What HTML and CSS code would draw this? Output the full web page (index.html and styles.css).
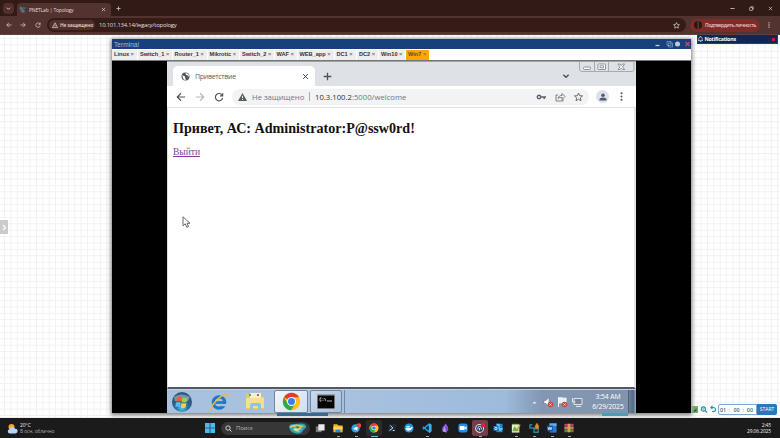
FILE: index.html
```html
<!DOCTYPE html>
<html lang="ru">
<head>
<meta charset="utf-8">
<title>PNETLab | Topology</title>
<link rel="stylesheet" href="styles.css">
</head>
<body>
<svg class="defs" aria-hidden="true">
  <symbol id="chrome" viewBox="0 0 24 24"><circle cx="12" cy="12" r="11" fill="#fbc116"/><path d="M12 12 2.5 6.5A11 11 0 0 1 21.5 6.5H12Z" fill="#e33b2e"/><path d="M2.5 6.5A11 11 0 0 0 11.5 23L16.7 14.7 12 12 7.2 14.7Z" fill="#2da94f"/><circle cx="12" cy="12" r="5.6" fill="#fff"/><circle cx="12" cy="12" r="4.4" fill="#3c7de8"/></symbol>
  <symbol id="reload" viewBox="0 0 12 12"><path d="M10 4.2A4.4 4.4 0 1 0 10.4 7M10.4 1.5v3.2H7.2" fill="none" stroke="currentColor" stroke-width="1.4"/></symbol>
  <symbol id="arrow" viewBox="0 0 12 12"><path d="M11 6H1.6M6 1.5 1.5 6 6 10.5" fill="none" stroke="currentColor" stroke-width="1.4"/></symbol>
  <symbol id="star" viewBox="0 0 12 12"><path d="m6 1 1.5 3.3 3.5.4-2.6 2.4.7 3.5L6 8.8l-3.1 1.8.7-3.5L1 4.7l3.5-.4Z" fill="none" stroke="currentColor" stroke-width="1.2"/></symbol>
  <symbol id="down" viewBox="0 0 12 12"><path d="m2 4 4 4 4-4" fill="none" stroke="currentColor" stroke-width="2"/></symbol>
  <symbol id="close" viewBox="0 0 12 12"><path d="m2 2 8 8M10 2l-8 8" stroke="currentColor" stroke-width="1.6"/></symbol>
  <symbol id="plus" viewBox="0 0 12 12"><path d="M6 1v10M1 6h10" stroke="currentColor" stroke-width="1.7"/></symbol>
  <symbol id="dots" viewBox="0 0 12 12"><g fill="currentColor"><circle cx="6" cy="1.7" r="1.3"/><circle cx="6" cy="6" r="1.3"/><circle cx="6" cy="10.3" r="1.3"/></g></symbol>
</svg>

<header class="tabstrip">
  <span class="tabsearch"><svg width="5" height="5"><use href="#down"/></svg></span>
  <div class="tab">
    <svg class="fav" viewBox="0 0 12 12"><path d="M1 2h10v3H1zM3 7h7v4H3z" fill="#237490"/><path d="M3 1v6l4-1v5" stroke="#db5d4d" fill="none" stroke-width="1.4"/></svg>
    <span class="tab-title">PNETLab | Topology</span>
    <svg class="tab-x" width="5" height="5"><use href="#close"/></svg>
  </div>
  <svg class="newtab" width="5" height="5"><use href="#plus"/></svg>
  <div class="winbtns">
    <svg viewBox="0 0 12 12"><path d="M1 6h10" stroke="#ddd" stroke-width="1.8"/></svg>
    <svg viewBox="0 0 12 12"><rect x="1.5" y="3.5" width="7" height="7" rx="1" fill="none" stroke="#ddd" stroke-width="1.6"/><path d="M4 1.5h5q1.7 0 1.7 2V8" fill="none" stroke="#ddd" stroke-width="1.5"/></svg>
    <svg viewBox="0 0 12 12" color="#ddd"><use href="#close"/></svg>
  </div>
</header>
<nav class="toolbar">
  <svg class="nav-i" width="6" height="6"><use href="#arrow"/></svg>
  <svg class="nav-i flip" width="6" height="6"><use href="#arrow"/></svg>
  <svg class="nav-i" width="6" height="6"><use href="#reload"/></svg>
  <div class="omni">
    <span class="insecure"><svg width="6" height="6" viewBox="0 0 12 12"><path d="M6 1.5 11.2 11H.8ZM6 5v3M6 8.6v1.2" fill="none" stroke="#eee" stroke-width="1.2"/></svg><b>Не защищено</b></span>
    <span class="url">10.101.134.14/legacy/topology</span>
    <svg class="omni-star" width="7" height="7"><use href="#star"/></svg>
  </div>
  <span class="verify"><i></i><b>Подтвердить личность</b></span>
  <svg class="menu" width="6" height="6"><use href="#dots"/></svg>
</nav>

<main class="canvas">
  <div class="side-handle"><svg width="5" height="7" viewBox="0 0 5 7"><path d="m1 1 2.5 2.5L1 6" fill="none" stroke="#fff" stroke-width="1.2"/></svg></div>

  <div class="notif">
    <svg width="5" height="6" viewBox="0 0 12 14"><path d="M2 10V6a4 4 0 0 1 8 0v4l1.5 1H.5ZM4.5 13h3M6 0v2" fill="none" stroke="#fff" stroke-width="1.5"/></svg>
    <b>Notifications</b><i></i>
  </div>

  <div class="peek peek-blue"></div>
  <div class="peek peek-teal"></div>

  <section class="terminal">
    <div class="term-title"><span>Terminal</span>
      <svg width="36" height="10" viewBox="0 0 36 10"><path d="M.5 6.500h4" stroke="#c6d2e4" stroke-width="1.200"/><path d="M12 2.500h4v4h-4zM13.500 4h4v4h-4z" fill="#17407c" stroke="#7d9ac2" stroke-width=".8"/><circle cx="22.500" cy="5" r="2.500" fill="#c2cbd4"/><path d="m30.500 3 4 4m0-4-4 4" stroke="#cf4761" stroke-width="1.300"/></svg>
    </div>
    <div class="term-tabs">
      <span class="w1">Linux <i>×</i></span><span class="w2">Switch_1 <i>×</i></span><span class="w3">Router_1 <i>×</i></span><span class="w4">Mikrotic <i>×</i></span><span class="w5">Switch_2 <i>×</i></span><span class="w6">WAF <i>×</i></span><span class="w7">WEB_app <i>×</i></span><span class="w8">DC1 <i>×</i></span><span class="w9">DC2 <i>×</i></span><span class="w10">Win10 <i>×</i></span><span class="w11 on">Win7 <i>×</i></span>
    </div>
    <div class="screen">
      <div class="guest">
        <div class="g-strip">
          <div class="g-tab">
            <svg width="9" height="9" viewBox="0 0 18 18"><circle cx="9" cy="9" r="8" fill="#53585e"/><path d="M3 6c2 3 5 1 5 4s2 3 1 6c-4 0-6-4-6-10ZM10 2c-2 2 0 4 2 4s1 3 4 3c0-4-2-6-6-7Z" fill="#fff"/></svg>
            <span>Приветствие</span>
            <svg class="g-tab-x" width="7" height="7"><use href="#close"/></svg>
          </div>
          <svg class="g-plus" width="9" height="9"><use href="#plus"/></svg>
          <svg class="g-down" width="8" height="8"><use href="#down"/></svg>
          <svg class="g-win" width="56" height="10" viewBox="0 0 56 10"><path d="M.5 0v7q0 2.500 2.500 2.500h50q2 0 2-2.500V0M15.500 0v9.500M29.500 0v9.500" fill="none" stroke="#a6abb2" stroke-width="1"/><g fill="#fff" stroke="#777d86" stroke-width=".8"><rect x="4.500" y="5" width="7" height="2.500" rx="1"/><rect x="19" y="2" width="7.500" height="5.500" rx=".5"/><path d="M21 3.800h3.500v2H21zM39 2h2l1.300 1.500L43.600 2h2l-2 2.800 2 2.700h-2l-1.300-1.500L41 7.500h-2l2-2.700Z"/></g></svg>
        </div>
        <div class="g-bar">
          <svg class="g-back" width="10" height="10"><use href="#arrow"/></svg>
          <svg class="g-fwd flip" width="10" height="10"><use href="#arrow"/></svg>
          <svg class="g-rel" width="10" height="10"><use href="#reload"/></svg>
          <div class="g-omni">
            <svg width="9" height="8" viewBox="0 0 18 16"><path d="M9 0 18 16H0Z" fill="#555a60"/><path d="M9 5.500v5M9 12v2" stroke="#fff" stroke-width="1.800"/></svg>
            <span class="g-insec">Не защищено</span><span class="g-sep"></span><span class="g-url"><em>10.3.100.2</em>:5000/welcome</span>
            <svg class="g-tools" width="50" height="10" viewBox="0 0 50 10"><g fill="none" stroke="#5f6368"><circle cx="3" cy="5" r="1.700" stroke-width="1.500"/><path d="M4.500 5H10M8.200 5v2" stroke-width="1.500"/><path d="M22 3h-2v6h7V7M22 6.500c.5-2.500 2-3 4-3V1.500l3 3-3 3V5.500c-2 0-3 0-4 1Z" stroke-width=".8"/><path d="m42.500 1 1.100 2.700 3 .2-2.300 2 .7 2.900-2.500-1.600L40 8.800l.7-2.900-2.300-2 3-.2Z" stroke-width=".9"/></g></svg>
          </div>
          <span class="avatar"><svg width="8" height="8" viewBox="0 0 8 8"><circle cx="4" cy="2.200" r="1.800" fill="#525b73"/><path d="M.5 7.500V6Q1 4.500 4 4.500T7.500 6v1.500Z" fill="#525b73"/></svg></span>
          <svg class="g-menu" width="9" height="9"><use href="#dots"/></svg>
        </div>
        <article class="page">
          <h2>Привет, АС: Administrator:P@ssw0rd!</h2>
          <a>Выйти</a>
          <svg class="cursor" width="9" height="12" viewBox="0 0 9 12"><path d="M1 .8v9l2.200-2 1.600 3.500 1.700-.8L5 7.300h3Z" fill="#fff" stroke="#555863" stroke-width=".9"/></svg>
        </article>
        <footer class="g-task">
          <svg class="orb" width="22" height="22" viewBox="0 0 22 22"><defs><radialGradient id="o" cy=".8"><stop stop-color="#55c7ed"/><stop offset=".6" stop-color="#276f9f"/><stop offset="1" stop-color="#32587d"/></radialGradient></defs><circle cx="11" cy="11" r="10" fill="url(#o)"/><path d="M3 6q7-5 16 0l-2 4H4Z" fill="#a4bfd1" opacity=".6"/><path d="M6 6q2-1.200 4.600 0l-.7 4.500q-2.300-1-4.500 0Z" fill="#f15c2b"/><path d="M11.500 6.500q2.300 1 5 0l-.9 4.500q-2.300 1-4.800 0Z" fill="#9bcf47"/><path d="M5 11.500q2.300-1 4.600 0l-.7 4.500q-2.300-1.200-4.600 0Z" fill="#5bbbed"/><path d="M10.500 12q2.300 1 4.900 0l-.9 4.500q-2.300.8-4.700 0Z" fill="#fdd043"/></svg>
          <svg class="ie" width="20" height="20" viewBox="0 0 20 20"><circle cx="10" cy="10.500" r="5.700" fill="none" stroke="#1e78c5" stroke-width="3.200"/><path d="M6 10.500h10" stroke="#1e78c5" stroke-width="2.600"/><path d="M12.500 12h5v2.200h-5z" fill="#a9c1df"/><path d="M3 18C-1 18 7 7 14 3.200c5-3 4.500 0 3.500 2.300" fill="none" stroke="#edba39" stroke-width="1.500"/></svg>
          <svg class="exp" width="21" height="20" viewBox="0 0 21 20"><path d="M1 3q0-1 1-1h5l2 2h9q1 0 1 1v12H1Z" fill="#e9ca6a"/><path d="M5 1h11v6H5z" fill="#f8f2ce"/><path d="M1 6h18v10H1z" fill="#f5df91"/><path d="M5 18v-5q0-2 2-2h7q2 0 2 2v5h-3v-4H8v4Z" fill="#83c9ec"/><path d="M4 2h2v2H4z" fill="#5ca968"/><path d="M12 2h2v2h-2z" fill="#d75b3c"/></svg>
          <div class="g-btn b1"><svg width="19" height="19"><use href="#chrome"/></svg></div>
          <div class="g-btn b2"><svg width="18" height="15" viewBox="0 0 18 15"><path d="M0 0h18v15H0z" fill="#9ba0a8"/><path d="M.7 1.500h16.600v12.800H.7z" fill="#050505"/><path d="M4.500 4H3v3h1.500M6 4.500v.8M6 6v.8M7.500 4l1.500 3M10 7h5" fill="none" stroke="#ddd" stroke-width=".8"/></svg></div>
          <span class="g-edge"></span>
          <svg class="tray" width="54" height="12" viewBox="0 0 54 12"><path d="m2.500 7.500 2-2 2 2Z" fill="#edf3fa"/><path d="M14 4.500h2l3-3v9l-3-3h-2Z" fill="#fff" stroke="#667"  stroke-width=".5"/><circle cx="20.500" cy="8.500" r="2.800" fill="#d94136"/><path d="m19.500 7.500 2 2m0-2-2 2" stroke="#fff" stroke-width=".8"/><path d="M28.500 1v10M29 2c3-1 4 1 7 0v5c-3 1-4-1-7 0" fill="#e8edf2" stroke="#fff" stroke-width=".9"/><circle cx="34.500" cy="8.500" r="2.800" fill="#d94136"/><path d="m33.500 7.500 2 2m0-2-2 2" stroke="#fff" stroke-width=".8"/><path d="M44 2.500h8v6h-8zM46 10.500h5M42.500 2v4h3" fill="#7a8796" stroke="#e8edf3" stroke-width=".9"/></svg>
          <div class="g-clock">3:54 AM<br>6/29/2025</div>
          <span class="g-peek"></span>
        </footer>
      </div>
    </div>
  </section>

  <div class="timer">
    <svg width="24" height="9" viewBox="0 0 24 9"><path d="M0 1h6v7H0z" fill="#78a97a"/><path d="M4.500 3v3.500H1Z" fill="#315e36"/><g fill="none" stroke="#2097a0" stroke-width="1.100"><circle cx="11.500" cy="4" r="2.100"/><path d="m13 5.500 2 2M10.500 4h2M19 2.500h2.500q2 0 2 2t-2 2H20M20.500 .8 18.800 2.500l1.700 1.700"/></g></svg>
    <div class="timebox"><b>01</b><i>:</i><b>00</b><i>:</i><b>00</b></div><span class="start">START</span>
  </div>
</main>

<footer class="taskbar">
  <div class="weather">
    <svg width="11" height="11" viewBox="0 0 11 11"><circle cx="4.500" cy="4" r="3" fill="#f6a82d"/><path d="M2.500 10.500a2.200 2.200 0 0 1 0-4.300A3 3 0 0 1 8 5.700a2.400 2.400 0 0 1 .5 4.800Z" fill="#bad4fb"/></svg>
    <div>20°C<br><span>В осн. облачно</span></div>
  </div>
  <svg class="win" width="10" height="10" viewBox="0 0 10 10"><path d="M0 0h4.700v4.700H0zM5.300 0H10v4.700H5.300zM0 5.300h4.700V10H0zM5.300 5.300H10V10H5.300z" fill="#44bdf2"/></svg>
  <div class="search"><svg width="7" height="7" viewBox="0 0 7 7"><circle cx="3" cy="3" r="2.200" fill="none" stroke="#ddd" stroke-width=".9"/><path d="m4.700 4.700 1.800 1.800" stroke="#ddd"/></svg><span>Поиск</span>
    <svg class="art" width="19" height="11" viewBox="0 0 19 11"><path d="M1 4q0-3 5-3l8-.500q5 1 4 4l-3 3q-2 4-7 3-6-1-7-6.500Z" fill="#31a4b4"/><path d="M2 3q6-3 14 0l-3 2Q7 3 2 5Z" fill="#e3bd65"/><path d="M5 6q5-3 9 0l-4 1 2 2-5-1Z" fill="#d8e19c"/><path d="m8 3 4 1-3 2Z" fill="#427a46"/></svg></div>
  <div class="apps">
    <span><svg viewBox="0 0 12 12"><path d="M1 4h7v7H1z" fill="#777"/><path d="M4 1.500h7.500V9H4z" fill="#e9e9e9"/></svg></span>
    <span class="run"><svg viewBox="0 0 12 12"><path d="M.5 1.500H5L6.500 3h5v8H.5z" fill="#f5b51e"/><path d="M.5 4.500h11V8H.5z" fill="#ffd663"/><path d="M3 8h6v3H3z" fill="#2489d8"/></svg></span>
    <span class="run"><svg viewBox="0 0 12 12"><circle cx="5.500" cy="6.500" r="5" fill="#27a5e5"/><path d="m2 6.500 6.500-2.700-1.200 5.500-2-1.500-1 1-.3-2Z" fill="#fff"/><circle cx="9.500" cy="3" r="2.800" fill="#ed434e"/></svg></span>
    <span class="run active"><svg viewBox="0 0 12 12"><use href="#chrome"/></svg></span>
    <span><svg viewBox="0 0 12 12"><path d="M2.500 1.500h9l-2 9h-9Z" fill="#1f2b3d"/><path d="m4 3 3 3-4 3M7 9h2" fill="none" stroke="#dce4ec" stroke-width="1.200"/></svg></span>
    <span><svg viewBox="0 0 12 12"><circle cx="6" cy="6" r="5.500" fill="#2196eb"/><path d="M2 6h6l1-1.500 1.500 1Q9 9 5.500 9.200 2 9.200 2 6Zm1-2h4v1.500H3Z" fill="#fff"/></svg></span>
    <span class="run"><svg viewBox="0 0 12 12"><path d="M9 1v10L1 4.500M9 1 1 7.500" fill="none" stroke="#279edf" stroke-width="1.800"/><path d="m8.500.5 3 1.300v8.400l-3 1.300Z" fill="#39b3f3"/></svg></span>
    <span><svg viewBox="0 0 12 12"><path d="m7 .5 2.500 4 .5 4L7.500 11.500 3 10 2.500 6Z" fill="#8250cf"/><path d="m7 .5-1 5 1.500 6L3 10Z" fill="#b499ee"/></svg></span>
    <span><svg viewBox="0 0 12 12"><rect x=".5" y=".5" width="11" height="11" rx="3" fill="#218ee9"/><rect x="2" y="3.500" width="6" height="5" rx="1" fill="#fff"/><path d="m8.300 5.500 2-1.500v4l-2-1.500Z" fill="#fff"/></svg></span>
    <span class="run hot"><svg viewBox="0 0 12 12"><circle cx="5.500" cy="6.500" r="4.700" fill="#26304e" stroke="#dae1f1" stroke-width="1.300"/><path d="M3.500 8V6a2 2 0 0 1 4 0v2M5.500 6v3" stroke="#fff" fill="none"/><circle cx="9.700" cy="2.300" r="2.600" fill="#f21640"/></svg></span>
    <span><svg viewBox="0 0 12 12"><path d="M4 1h7.500v10H4z" fill="#2486d4"/><path d="M4 1h4v5h3.500v2L8 10Z" fill="#5dc4f2"/><path d="M.5 3.500h6v6h-6z" fill="#126bb8"/><circle cx="3.500" cy="6.500" r="1.500" fill="none" stroke="#fff"/></svg></span>
    <span class="run"><svg viewBox="0 0 12 12"><path d="M1 2h9v9.500H1z" fill="#e5edd6"/><path d="M2 9l2-5 3 3 2-2v5H2z" fill="#71ae3f"/><path d="M1.500 1h8v1.500h-8z" fill="#8bbb59"/><path d="m11 2-4 6" stroke="#d3a449" stroke-width="1.500"/></svg></span>
    <span class="run"><svg viewBox="0 0 12 12"><path d="M1 2v4h5v5h5V7H6M1 2h3" fill="none" stroke="#2189a0" stroke-width="1.700"/><path d="M7.500 3h4v3.500h-4zM8.500 3V1h2v2" fill="#e98a1e" stroke="#e98a1e" stroke-width=".7"/></svg></span>
    <span class="run"><svg viewBox="0 0 12 12"><path d="M3 .5h8.500v11H3z" fill="#2b7bd3"/><path d="M3 .5h8.500v3H3z" fill="#59b2f2"/><path d="M0 3h7v7H0z" fill="#174eaa"/><path d="m1.200 5 1 3.200L3.500 5l1.200 3.200 1-3.200" fill="none" stroke="#fff" stroke-width=".9"/></svg></span>
    <span class="run"><svg viewBox="0 0 12 12"><path d="M.5 1h11v3H.5z" fill="#b54188"/><path d="M.5 4h11v3.500H.5z" fill="#4169ba"/><path d="M.5 7.500h11V11H.5z" fill="#4a9a46"/><path d="M2.500 1v10M9.500 1v10" stroke="#b83b36"/><path d="M4.500 1h3v10h-3zM.5 5h11v1.500H.5z" fill="#dda13b"/></svg></span>
  </div>
  <div class="clock">2:45<br>29.06.2025</div>
</footer>
</body>
</html>
```
FILE: styles.css
```css
* { box-sizing: border-box; }
html, body { height: 100%; }
body { margin: 0; width: 780px; height: 438px; overflow: hidden; display: flex; flex-direction: column; font-family: "Open Sans", "Noto Sans", sans-serif; }
svg { display: block; flex: none; }
i, em { font-style: normal; }
.defs { position: absolute; width: 0; height: 0; }
.flip { transform: scaleX(-1); }

/* Browser frame */
.tabstrip { height: 16px; flex: none; background: #321a16; display: flex; align-items: center; color: #e4d9d6; }
.tabsearch { width: 11px; height: 11px; margin-left: 3px; border-radius: 4px; background: #51302c; display: grid; place-items: center; }
.tab { width: 94px; height: 13px; margin: 3px 0 0 3px; padding-left: 2px; background: #533330; border-radius: 4px 4px 0 0; display: flex; align-items: center; }
.fav { width: 7px; height: 7px; }
.tab-title { margin-left: 3px; font-size: 5px; letter-spacing: -.17px; white-space: nowrap; }
.tab-x { margin-right: 5px; margin-left: auto; }
.newtab { margin-left: 5px; }
.winbtns { margin-left: auto; display: flex; gap: 14px; padding-right: 7px; }
.winbtns svg { width: 5px; height: 5px; }
.toolbar { height: 19px; flex: none; background: #533330; display: flex; align-items: center; border-bottom: 1px solid #62403d; color: #e2d5d2; }
.nav-i { margin-left: 6px; margin-right: 3px; }
.nav-i + .nav-i { margin-left: 5px; }
.nav-i:nth-of-type(3) { margin-left: 6px; margin-right: 6px; }
.omni { width: 639px; height: 14px; border-radius: 7px; background: #351c18; display: flex; align-items: center; padding-left: 2px; }
.insecure { width: 46px; height: 10px; border-radius: 5px; background: #51302c; display: flex; align-items: center; padding-left: 3px; font-size: 5px; white-space: nowrap; }
.insecure b { font-weight: 600; margin-left: 2px; letter-spacing: -.21px; }
.url { margin-left: 4px; font-size: 5.9px; letter-spacing: -.21px; white-space: nowrap; color: #e6dcda; }
.omni-star { margin-left: auto; margin-right: 6px; }
.verify { margin-left: 4px; width: 70px; height: 13px; border-radius: 7px; background: #7d2c29; display: flex; align-items: center; padding-left: 4px; gap: 3px; font-size: 4.9px; white-space: nowrap; color: #efc9c5; }
.verify i { width: 8px; height: 8px; flex: none; border-radius: 50%; background: linear-gradient(90deg, #271815 40%, #6d4b43 50%, #291816 65%); }
.verify b { font-weight: 600; letter-spacing: -.31px; }
.menu { margin-left: 6px; }

/* Topology canvas */
.canvas { position: relative; flex: 1; min-height: 0; background-color: #fff; background-image: linear-gradient(#f1f1f1 1px, transparent 1px), linear-gradient(90deg, #f1f1f1 1px, transparent 1px); background-size: 6.4px 6.4px; background-position: 4px 3px; border-bottom: 1px solid #eee; }
.side-handle { position: absolute; left: 0; top: 185px; width: 8px; height: 14px; background: #cbcbcb; display: grid; place-items: center; }
.notif { position: absolute; left: 697px; top: 0; width: 81px; height: 9px; background: #102753; color: #fff; display: flex; align-items: center; padding: 0 1px 0 0; font: 5.3px "Open Sans", sans-serif; border: 1px solid #263f70; border-top: 0; }
.notif b { margin-left: 1.500px; letter-spacing: -.24px; }
.notif i { width: 3px; height: 3px; background: #e31027; margin-left: auto; margin-right: 1px; }
.peek { position: absolute; top: 378px; height: 3px; z-index: 2; }
.peek-blue { left: 277px; width: 51px; background: #386990; }
.peek-teal { left: 602px; width: 26px; background: #4a9db2; }
.terminal { position: absolute; left: 112px; top: 4px; width: 579px; height: 374px; display: flex; flex-direction: column; box-shadow: 0 1px 4px 1px #777; background: #000; }
.term-title { height: 10px; flex: none; background: #17407c; color: #a9bbd7; display: flex; align-items: center; justify-content: space-between; padding: 0 0 0 2px; font: 6.5px "Liberation Sans", sans-serif; letter-spacing: .05px; }
.term-tabs { height: 12px; flex: none; background: #fff; border-bottom: 1px solid #777; display: flex; font: bold 5.6px "Liberation Sans", sans-serif; color: #333; }
.term-tabs span { height: 10px; margin-top: 1px; margin-right: 1px; background: #eee; padding-left: 2px; line-height: 9px; white-space: nowrap; letter-spacing: .02px; }
.term-tabs i { color: #777; }
.term-tabs .w1 { width: 25px; } .term-tabs .w2 { width: 33.500px; } .term-tabs .w3 { width: 34px; }
.term-tabs .w4 { width: 31.500px; } .term-tabs .w5 { width: 33.500px; } .term-tabs .w6 { width: 22px; }
.term-tabs .w7 { width: 36px; } .term-tabs .w8 { width: 21.500px; } .term-tabs .w9 { width: 21px; }
.term-tabs .w10 { width: 26px; } .term-tabs .w11 { width: 23px; }
.term-tabs .on { background: #ffa50a; color: #674c1c; }
.screen { flex: 1; min-height: 0; padding-left: 55px; }

/* Guest desktop */
.guest { width: 469px; height: 352px; display: flex; flex-direction: column; background: #fff; }
.g-strip { height: 25px; flex: none; background: #dee1e6; border-top: 1px solid #9da1a8; display: flex; align-items: center; color: #4d5156; position: relative; }
.g-tab { width: 142px; height: 20px; margin: 4px 0 0 6px; padding-left: 8px; background: #fff; border-radius: 5px 5px 0 0; display: flex; align-items: center; font-size: 7px; letter-spacing: -.3px; color: #5a5e63; }
.g-tab span { margin-left: 5px; }
.g-tab-x { margin-left: auto; margin-right: 6px; color: #333; }
.g-plus { margin: 4px 0 0 7.500px; }
.g-down { margin: 4px 66px 0 auto; }
.g-win { position: absolute; right: 1px; top: 0; }
.g-bar { height: 22px; flex: none; display: flex; align-items: center; border-bottom: 1px solid #e1e2e4; color: #505459; }
.g-back { margin-left: 9px; }
.g-fwd { margin-left: 9px; color: #b8babd; }
.g-rel { margin-left: 9px; }
.g-omni { margin-left: 8px; width: 357px; height: 16px; background: #f1f3f4; border-radius: 8px; display: flex; align-items: center; padding-left: 6px; font-size: 7.7px; color: #74787d; }
.g-insec { width: 53px; margin-left: 5px; letter-spacing: -.02px; white-space: nowrap; }
.g-sep { width: 1px; height: 9px; background: #aaa; margin: 0 5px 0 4px; }
.g-url { letter-spacing: .01px; }
.g-url em { color: #333; }
.g-tools { margin-left: auto; margin-right: 3px; }
.avatar { width: 13px; height: 13px; background: #dce1eb; border-radius: 50%; margin-left: 7px; display: grid; place-items: center; }
.g-menu { margin-left: 8px; }
.page { flex: 1; min-height: 0; position: relative; padding: 12px 5px 0; border-left: 1px solid #ddd; border-right: 2px solid #e0e3e8; border-bottom: 2px solid #555a62; font-family: "Liberation Serif", serif; }
.page h2 { margin: 0 0 10px; font-size: 14.1px; line-height: 16px; color: #111; white-space: nowrap; }
.page a { color: #7b3f9c; text-decoration: underline; font-size: 9.5px; line-height: 12px; display: block; }
.cursor { position: absolute; left: 14px; top: 108px; }
.g-task { height: 24px; flex: none; display: flex; align-items: center; background: linear-gradient(90deg, #a8c1df 0 38%, #9ebbdc 72%, #8297b3 80%, #8194ad); border-top: 1px solid #c2d3e8; }
.orb { margin-left: 4px; }
.ie { margin-left: 16px; }
.exp { margin-left: 16px; }
.g-btn { height: 23px; border: 1px solid #6f85a1; border-radius: 2px; display: grid; place-items: center; }
.b1 { width: 34px; margin-left: 8px; background: linear-gradient(135deg, #f4f7fb, #cfdeef); }
.b2 { width: 32px; margin-left: 2px; background: linear-gradient(135deg, #ccd9ea, #a9bfdb); }
.g-edge { width: 3px; height: 23px; border-right: 1px solid #7189a8; }
.tray { margin-left: auto; }
.g-clock { width: 40px; margin-left: 4px; text-align: center; color: #fff; font-size: 6.8px; line-height: 10px; letter-spacing: -.08px; white-space: nowrap; }
.g-peek { width: 8px; height: 23px; margin-left: 0; border-left: 1px solid #4e617a; background: linear-gradient(90deg, #718299, #536b89 60%, #96a9bf); }

.timer { position: absolute; left: 692px; top: 369px; height: 11px; display: flex; align-items: center; }
.timebox { margin-left: 2px; width: 39px; height: 11px; background: #fff; border: 1px solid #83a7cc; border-radius: 2px 0 0 2px; display: flex; align-items: center; justify-content: space-between; padding: 0 3px 0 1px; font-size: 5.4px; color: #356d9c; }
.timebox b { font-weight: 600; }
.start { width: 20px; height: 11px; background: #2d76b9; color: #fff; font-size: 5px; line-height: 11px; text-align: center; border-radius: 0 2px 2px 0; }

/* Host taskbar */
.taskbar { height: 20px; flex: none; background: #1b1b1b; display: flex; align-items: center; color: #f1f1f1; }
.weather { width: 205px; padding-left: 7px; display: flex; align-items: center; gap: 2px; font-size: 4.900px; line-height: 6.500px; }
.weather span { color: #aaa; letter-spacing: -.09px; }
.search { margin-left: 6px; width: 89px; height: 13px; border-radius: 7px; background: #373737; display: flex; align-items: center; padding: 0 3px 0 4px; font-size: 5.700px; color: #bbb; }
.search span { margin-left: 4px; }
.art { margin-left: auto; }
.apps { display: flex; margin-left: 1.500px; }
.apps span { width: 16px; height: 16px; margin: 0 .9px; display: grid; place-items: center; border-radius: 2px; position: relative; }
.apps svg { width: 10px; height: 10px; }
.apps .run::after { content: ""; position: absolute; left: 7px; bottom: -1px; width: 3px; height: 1px; background: #aaa; }
.apps .active { background: #2b2b2b; }
.apps .active::after { left: 5px; width: 7px; background: #61bdec; }
.apps .hot { background: #743d49; }
.clock { margin-left: auto; margin-right: 9px; text-align: right; font-size: 4.900px; line-height: 6.500px; letter-spacing: -.1px; }
```
